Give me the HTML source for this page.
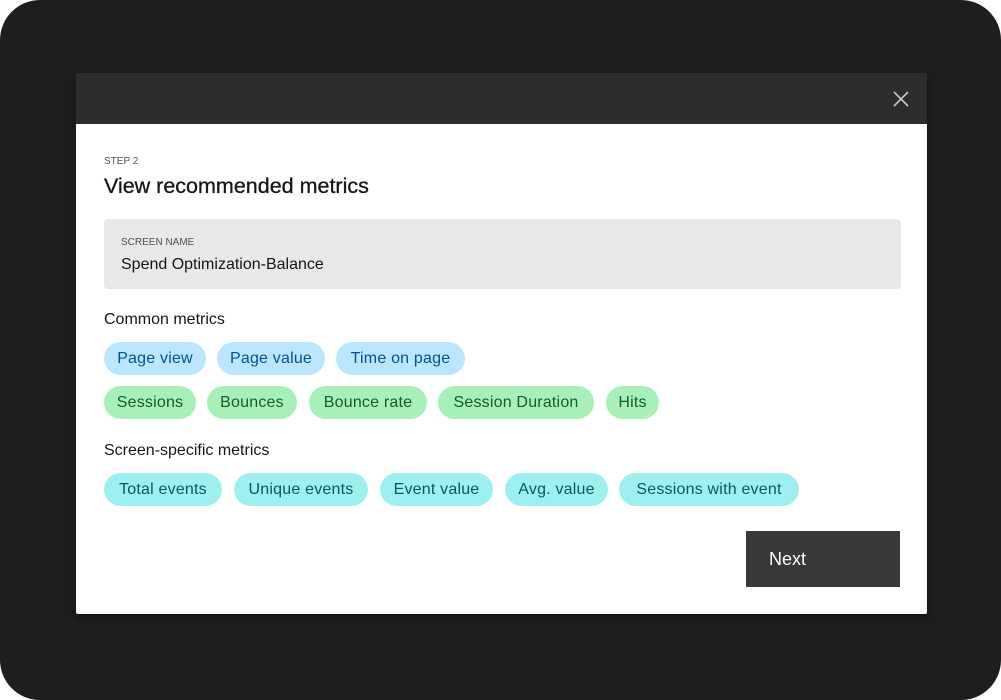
<!DOCTYPE html>
<html><head><style>
*{margin:0;padding:0;box-sizing:border-box}
html,body{width:1001px;height:700px;background:#fff;overflow:hidden;font-family:"Liberation Sans",sans-serif}
.frame{position:absolute;left:0;top:0;width:1001px;height:700px;background:#1f1e1f;border-radius:40px}
.modal{position:absolute;left:76px;top:73px;width:851px;height:541px;background:#fff;border-radius:2px;box-shadow:0 4px 10px rgba(0,0,0,.4)}
.hdr{position:absolute;left:0;top:0;width:851px;height:51px;background:#2d2d2d}
.abs{position:absolute;white-space:nowrap}
.chip{position:absolute;height:33px;border-radius:17px;font-size:16px;line-height:34px;text-align:center;letter-spacing:.2px}
.b{background:#bae6ff;color:#00539a}
.g{background:#a7f0ba;color:#0e6027}
.t{background:#9ef0f0;color:#005d5d}
</style></head><body>
<div class="frame"></div>
<div class="modal">
<div class="hdr">
<svg class="abs" style="left:817px;top:18px" width="16" height="16" viewBox="0 0 16 16"><path d="M1 1L15 15M15 1L1 15" stroke="#c6c6c6" stroke-width="1.6"/></svg>
</div>
</div>
<div class="abs" style="left:104px;top:156px;font-size:10px;color:#525252">STEP 2</div>
<div class="abs" style="left:104px;top:174px;font-size:21.5px;color:#161616;-webkit-text-stroke:0.3px #161616">View recommended metrics</div>
<div class="abs" style="left:104px;top:219px;width:797px;height:70px;background:#e8e8e8;border-radius:4px"></div>
<div class="abs" style="left:121px;top:237px;font-size:10px;color:#525252">SCREEN NAME</div>
<div class="abs" style="left:121px;top:256px;font-size:16px;color:#161616">Spend Optimization-Balance</div>
<div class="abs" style="left:104px;top:311px;font-size:16px;color:#161616">Common metrics</div>
<div class="chip b" style="left:104px;top:342px;width:102px">Page view</div>
<div class="chip b" style="left:217px;top:342px;width:108px">Page value</div>
<div class="chip b" style="left:336px;top:342px;width:129px">Time on page</div>
<div class="chip g" style="left:104px;top:386px;width:92px">Sessions</div>
<div class="chip g" style="left:207px;top:386px;width:90px">Bounces</div>
<div class="chip g" style="left:309px;top:386px;width:118px">Bounce rate</div>
<div class="chip g" style="left:438px;top:386px;width:156px">Session Duration</div>
<div class="chip g" style="left:606px;top:386px;width:53px">Hits</div>
<div class="abs" style="left:104px;top:442px;font-size:16px;color:#161616">Screen-specific metrics</div>
<div class="chip t" style="left:104px;top:473px;width:118px">Total events</div>
<div class="chip t" style="left:234px;top:473px;width:134px">Unique events</div>
<div class="chip t" style="left:380px;top:473px;width:113px">Event value</div>
<div class="chip t" style="left:505px;top:473px;width:103px">Avg. value</div>
<div class="chip t" style="left:619px;top:473px;width:180px">Sessions with event</div>
<div class="abs" style="left:746px;top:531px;width:154px;height:56px;background:#393939;color:#fff;font-size:18px;line-height:57px;padding-left:23px">Next</div>
</body></html>
